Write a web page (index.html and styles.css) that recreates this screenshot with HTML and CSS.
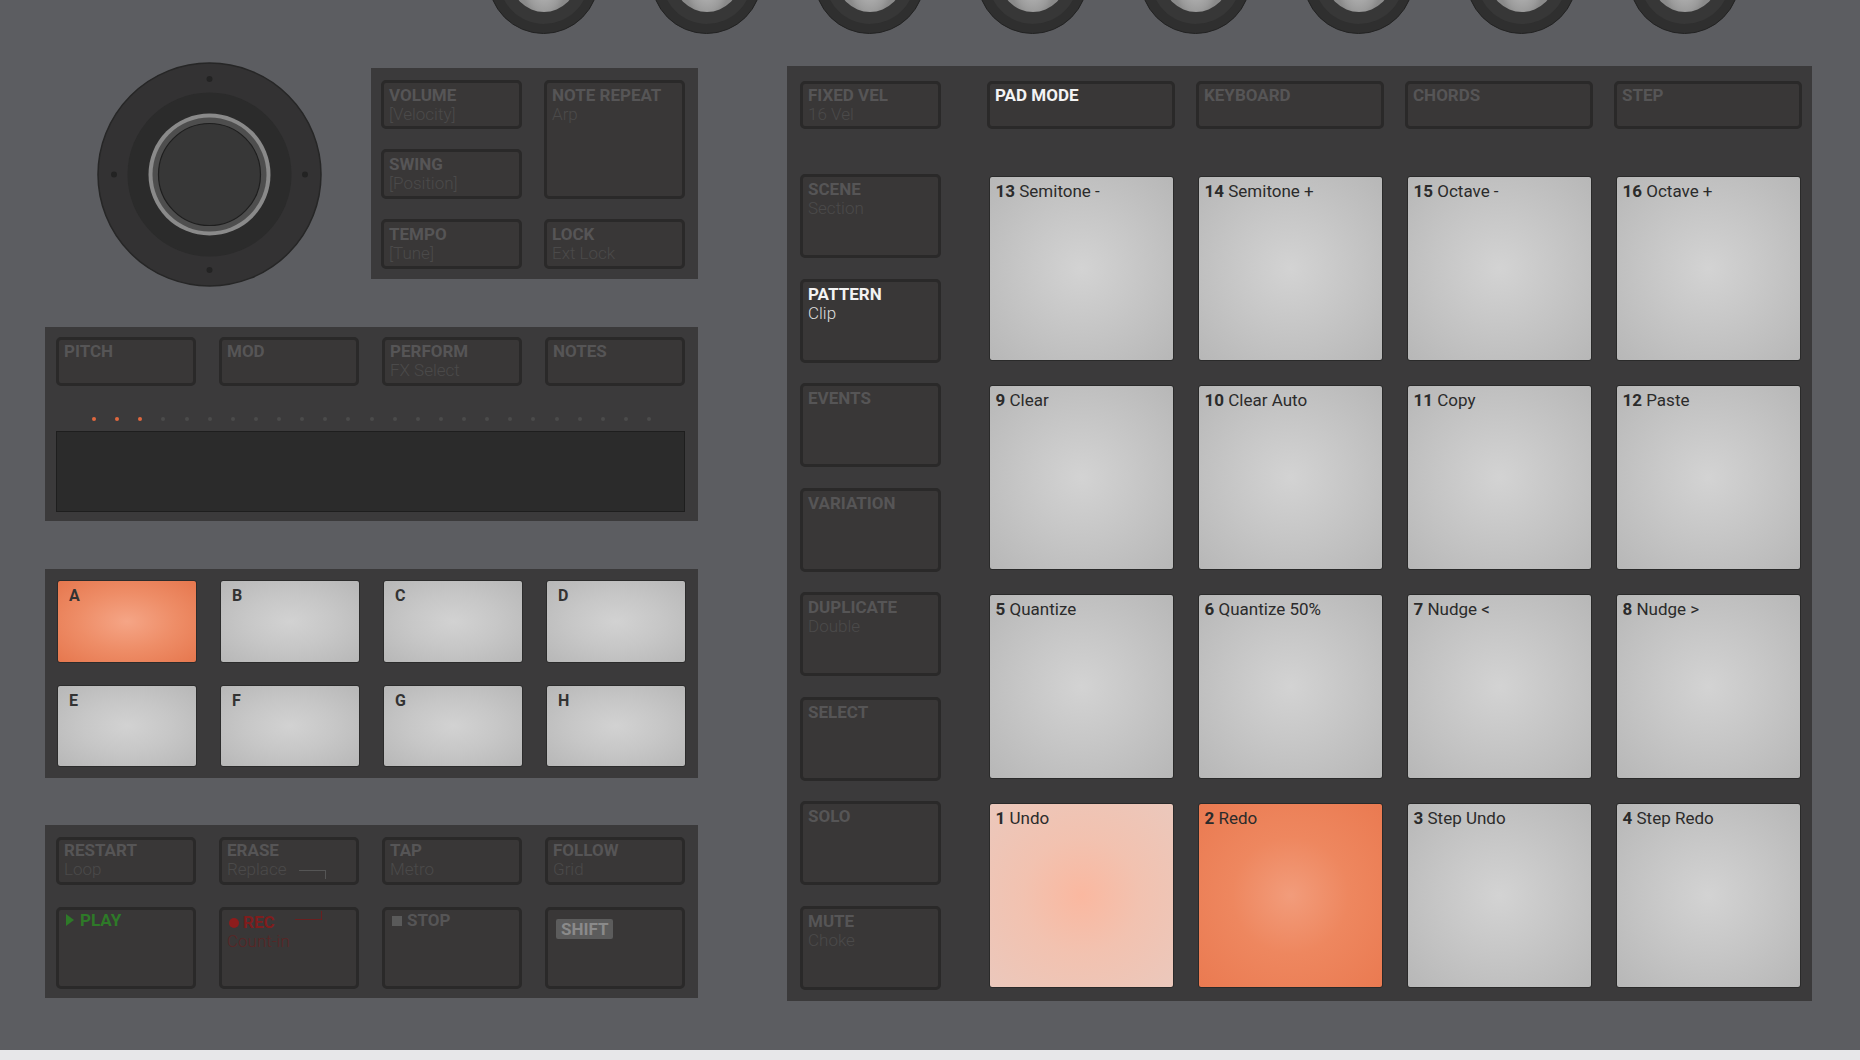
FILE: index.html
```html
<!DOCTYPE html>
<html lang="en">
<head>
  <meta charset="UTF-8">
  <title>Controller - Pad Mode</title>
  <link rel="stylesheet" href="styles.css">
</head>
<body>
  <div class="device">
    <div class="knobs">
      <div class="knob"><div class="knob-cap"></div></div>
      <div class="knob"><div class="knob-cap"></div></div>
      <div class="knob"><div class="knob-cap"></div></div>
      <div class="knob"><div class="knob-cap"></div></div>
      <div class="knob"><div class="knob-cap"></div></div>
      <div class="knob"><div class="knob-cap"></div></div>
      <div class="knob"><div class="knob-cap"></div></div>
      <div class="knob"><div class="knob-cap"></div></div>
    </div>

    <div class="deck">
      <div class="left-col">
        <div class="top-section">
          <svg class="joystick" viewBox="0 0 225 225" width="225" height="225">
            <circle cx="112.5" cy="112.5" r="111.5" fill="#333233" stroke="#262626" stroke-width="1.5"/>
            <circle cx="112.5" cy="17" r="3" fill="#232323"/>
            <circle cx="112.5" cy="208" r="3" fill="#232323"/>
            <circle cx="17" cy="112.5" r="3" fill="#232323"/>
            <circle cx="208" cy="112.5" r="3" fill="#232323"/>
            <circle cx="112.5" cy="112.5" r="82" fill="#2b2b2b"/>
            <circle cx="112.5" cy="112.5" r="61" fill="#8a8a8a"/>
            <circle cx="112.5" cy="112.5" r="57" fill="#4e4e4e"/>
            <circle cx="112.5" cy="112.5" r="51" fill="#373737" stroke="#1e1e1e" stroke-width="1.2"/>
          </svg>

          <div class="panel mix-panel">
            <div class="btn"><span class="lbl">VOLUME</span><span class="sub">[Velocity]</span></div>
            <div class="btn tall"><span class="lbl">NOTE REPEAT</span><span class="sub">Arp</span></div>
            <div class="btn"><span class="lbl">SWING</span><span class="sub">[Position]</span></div>
            <div class="btn"><span class="lbl">TEMPO</span><span class="sub">[Tune]</span></div>
            <div class="btn"><span class="lbl">LOCK</span><span class="sub">Ext Lock</span></div>
          </div>
        </div>

        <div class="panel strip-panel">
          <div class="row4">
            <div class="btn"><span class="lbl">PITCH</span></div>
            <div class="btn"><span class="lbl">MOD</span></div>
            <div class="btn"><span class="lbl">PERFORM</span><span class="sub">FX Select</span></div>
            <div class="btn"><span class="lbl">NOTES</span></div>
          </div>
          <div class="led-row">
            <span class="led lit"></span><span class="led lit"></span><span class="led lit"></span>
            <span class="led"></span><span class="led"></span><span class="led"></span><span class="led"></span>
            <span class="led"></span><span class="led"></span><span class="led"></span><span class="led"></span>
            <span class="led"></span><span class="led"></span><span class="led"></span><span class="led"></span>
            <span class="led"></span><span class="led"></span><span class="led"></span><span class="led"></span>
            <span class="led"></span><span class="led"></span><span class="led"></span><span class="led"></span>
            <span class="led"></span><span class="led"></span>
          </div>
          <div class="touch-strip"></div>
        </div>

        <div class="panel group-panel">
          <div class="gpad orange">A</div>
          <div class="gpad">B</div>
          <div class="gpad">C</div>
          <div class="gpad">D</div>
          <div class="gpad">E</div>
          <div class="gpad">F</div>
          <div class="gpad">G</div>
          <div class="gpad">H</div>
        </div>

        <div class="panel transport-panel">
          <div class="btn"><span class="lbl">RESTART</span><span class="sub">Loop</span></div>
          <div class="btn"><span class="lbl">ERASE</span><span class="sub">Replace<i class="link-down"></i></span></div>
          <div class="btn"><span class="lbl">TAP</span><span class="sub">Metro</span></div>
          <div class="btn"><span class="lbl">FOLLOW</span><span class="sub">Grid</span></div>
          <div class="btn"><span class="lbl play"><i class="tri"></i>PLAY</span></div>
          <div class="btn"><span class="lbl rec"><i class="rec-dot"></i>REC<i class="link-up"></i></span><span class="sub rec-sub">Count-in</span></div>
          <div class="btn"><span class="lbl"><i class="sq"></i>STOP</span></div>
          <div class="btn"><span class="shift">SHIFT</span></div>
        </div>
      </div>

      <div class="panel pad-panel">
        <div class="side-col">
          <div class="btn short"><span class="lbl">FIXED VEL</span><span class="sub">16 Vel</span></div>
          <div class="side-list">
            <div class="btn"><span class="lbl">SCENE</span><span class="sub">Section</span></div>
            <div class="btn on"><span class="lbl">PATTERN</span><span class="sub">Clip</span></div>
            <div class="btn"><span class="lbl">EVENTS</span></div>
            <div class="btn"><span class="lbl">VARIATION</span></div>
            <div class="btn"><span class="lbl">DUPLICATE</span><span class="sub">Double</span></div>
            <div class="btn"><span class="lbl">SELECT</span></div>
            <div class="btn"><span class="lbl">SOLO</span></div>
            <div class="btn"><span class="lbl">MUTE</span><span class="sub">Choke</span></div>
          </div>
        </div>

        <div class="pad-area">
          <div class="mode-row">
            <div class="btn on"><span class="lbl">PAD MODE</span></div>
            <div class="btn"><span class="lbl">KEYBOARD</span></div>
            <div class="btn"><span class="lbl">CHORDS</span></div>
            <div class="btn"><span class="lbl">STEP</span></div>
          </div>
          <div class="pads">
            <div class="pad"><b>13</b> Semitone -</div>
            <div class="pad"><b>14</b> Semitone +</div>
            <div class="pad"><b>15</b> Octave -</div>
            <div class="pad"><b>16</b> Octave +</div>
            <div class="pad"><b>9</b> Clear</div>
            <div class="pad"><b>10</b> Clear Auto</div>
            <div class="pad"><b>11</b> Copy</div>
            <div class="pad"><b>12</b> Paste</div>
            <div class="pad"><b>5</b> Quantize</div>
            <div class="pad"><b>6</b> Quantize 50%</div>
            <div class="pad"><b>7</b> Nudge &lt;</div>
            <div class="pad"><b>8</b> Nudge &gt;</div>
            <div class="pad pale"><b>1</b> Undo</div>
            <div class="pad orange"><b>2</b> Redo</div>
            <div class="pad"><b>3</b> Step Undo</div>
            <div class="pad"><b>4</b> Step Redo</div>
          </div>
        </div>
      </div>
    </div>
  </div>
</body>
</html>
```

FILE: styles.css
```css
body {
  margin: 0;
  background-color: #e7e7e9;
  font-family: Roboto, "Liberation Sans", sans-serif;
  overflow: hidden;
}

.device {
  height: 1050px;
  background-color: #5c5d61;
  overflow: hidden;
}

/* top knob row, mostly cut off by the window edge */
.knobs {
  display: flex;
  gap: 52px;
  padding-left: 488px;
  margin-top: -77px;
  height: 111px;
}

.knob {
  flex: none;
  width: 111px;
  height: 111px;
  box-sizing: border-box;
  border-radius: 50%;
  background-color: #2f2f2f;
  border: 1px solid #222;
  display: flex;
  align-items: center;
  justify-content: center;
}

.knob-cap {
  width: 66px;
  height: 66px;
  border-radius: 50%;
  background: radial-gradient(ellipse 35% 60% at 50% 50%, #c6c6c6, #9b9b9b 80%, #8a8a8a);
  box-shadow: 0 0 0 12px #373737;
}

.deck {
  display: flex;
  gap: 89px;
  margin-top: 32px;
  padding-left: 45px;
}

.left-col {
  width: 653px;
  display: flex;
  flex-direction: column;
}

.panel {
  background-color: #3b3a3b;
  box-sizing: border-box;
}

/* buttons */
.btn {
  background-color: #393737;
  border: 3px solid #2a2929;
  border-radius: 5px;
  box-sizing: border-box;
  padding: 2px 5px 0;
  overflow: hidden;
}

.lbl {
  display: block;
  font-weight: 700;
  font-size: 17px;
  line-height: 19px;
  color: #565556;
  white-space: nowrap;
}

.sub {
  display: block;
  font-weight: 300;
  font-size: 17px;
  line-height: 19px;
  color: #4b4a4a;
  white-space: nowrap;
}

.btn.on .lbl {
  color: #f3f3f3;
}

.btn.on .sub {
  color: #dedede;
}

/* joystick + volume block */
.top-section {
  display: flex;
  height: 221px;
}

.joystick {
  flex: none;
  margin: -4px 0 0 52px;
}

.mix-panel {
  margin: 2px 0 0 49px;
  width: 327px;
  height: 211px;
  padding: 12px 13px 0 10px;
  display: grid;
  grid-template-columns: 141px 141px;
  grid-template-rows: 49px 50px 50px;
  column-gap: 22px;
  row-gap: 20px;
}

.mix-panel .btn {
  padding-top: 3px;
}

.mix-panel .tall {
  grid-row: span 2;
}

/* touch strip block */
.strip-panel {
  margin-top: 40px;
  height: 194px;
  padding: 10px 13px 9px 11px;
}

.row4 {
  display: grid;
  grid-template-columns: repeat(4, 140px);
  column-gap: 23px;
  height: 49px;
}

.led-row {
  display: flex;
  justify-content: space-between;
  padding: 0 34px 0 36px;
  margin-top: 31px;
}

.led {
  width: 4px;
  height: 4px;
  border-radius: 50%;
  background-color: #4b4b4b;
}

.led.lit {
  background-color: #e0673e;
}

.touch-strip {
  margin-top: 10px;
  height: 81px;
  box-sizing: border-box;
  background-color: #2b2b2b;
  border: 1px solid #1e1e1e;
}

/* group pads */
.group-panel {
  margin-top: 48px;
  padding: 11px 14px 11px 12px;
  display: grid;
  grid-template-columns: repeat(4, 140px);
  grid-template-rows: 83px 82px;
  column-gap: 23px;
  row-gap: 22px;
}

.gpad {
  border-radius: 3px;
  border: 1px solid #2c2c2c;
  box-sizing: border-box;
  padding: 5px 11px;
  font-weight: 700;
  font-size: 16px;
  color: #333;
  background: radial-gradient(ellipse at 50% 50%, #d2d2d2 0%, #c7c7c7 45%, #b7b7b7 100%);
}

.gpad.orange {
  background: radial-gradient(ellipse at 50% 50%, #f5a586 0%, #ee8d67 50%, #e6774e 100%);
}

/* transport */
.transport-panel {
  margin-top: 47px;
  padding: 12px 14px 9px 11px;
  display: grid;
  grid-template-columns: repeat(4, 140px);
  grid-template-rows: 48px 82px;
  column-gap: 23px;
  row-gap: 22px;
}

.transport-panel .btn {
  padding-top: 1px;
}

.lbl.play {
  color: #2e7a28;
}

.tri {
  display: inline-block;
  width: 0;
  height: 0;
  border-top: 6px solid transparent;
  border-bottom: 6px solid transparent;
  border-left: 8px solid #2e7a28;
  margin: 0 6px 0 2px;
}

.lbl.rec {
  color: #7f1d1d;
}

.rec-dot {
  display: inline-block;
  width: 10px;
  height: 10px;
  border-radius: 50%;
  background-color: #8d1c1c;
  margin: 0 4px 0 2px;
}

.rec-sub {
  color: #5a2525;
}

.link-down {
  display: inline-block;
  width: 26px;
  height: 8px;
  margin-left: 12px;
  border-top: 1px solid #555;
  border-right: 1px solid #555;
  vertical-align: -4px;
}

.link-up {
  display: inline-block;
  width: 26px;
  height: 8px;
  margin-left: 20px;
  border-bottom: 1px solid #6a1f1f;
  border-right: 1px solid #6a1f1f;
  vertical-align: 8px;
}

.sq {
  display: inline-block;
  width: 10px;
  height: 10px;
  background-color: #5a5a5a;
  margin: 0 5px 0 2px;
}

.shift {
  display: inline-block;
  margin: 8px 0 0 3px;
  padding: 1px 5px;
  background-color: #5c5c5c;
  border-radius: 2px;
  font-weight: 700;
  font-size: 17px;
  line-height: 18px;
  color: #8a8a8a;
}

/* right pad section */
.pad-panel {
  width: 1025px;
  padding: 15px 10px 11px 13px;
  display: flex;
  gap: 46px;
}

.side-col {
  width: 141px;
  display: flex;
  flex-direction: column;
}

.btn.short {
  height: 48px;
}

.side-list {
  margin-top: 45px;
  display: flex;
  flex-direction: column;
  gap: 20.5px;
}

.side-list .btn {
  height: 84px;
  padding-top: 3px;
}

.pad-area {
  width: 815px;
}

.mode-row {
  display: grid;
  grid-template-columns: repeat(4, 188px);
  column-gap: 21px;
  height: 48px;
}

.pads {
  margin-top: 47px;
  padding: 0 1.5px;
  display: grid;
  grid-template-columns: repeat(4, 185px);
  grid-template-rows: repeat(4, 185px);
  gap: 24px;
}

.pad {
  border-radius: 3px;
  border: 1px solid #2a2a2a;
  box-sizing: border-box;
  padding: 4px 6px;
  font-size: 17px;
  line-height: 20px;
  color: #2b2b2b;
  background: radial-gradient(circle at 50% 50%, #d3d3d3 0%, #c8c8c8 40%, #b7b7b7 100%);
}

.pad b {
  font-weight: 700;
}

.pad.pale {
  background: radial-gradient(circle at 50% 50%, #fab8a0 0%, #f2c2b0 45%, #ebc8bc 100%);
}

.pad.orange {
  background: radial-gradient(circle at 50% 50%, #f29c7b 0%, #ee875f 45%, #ea7a51 100%);
}
```
